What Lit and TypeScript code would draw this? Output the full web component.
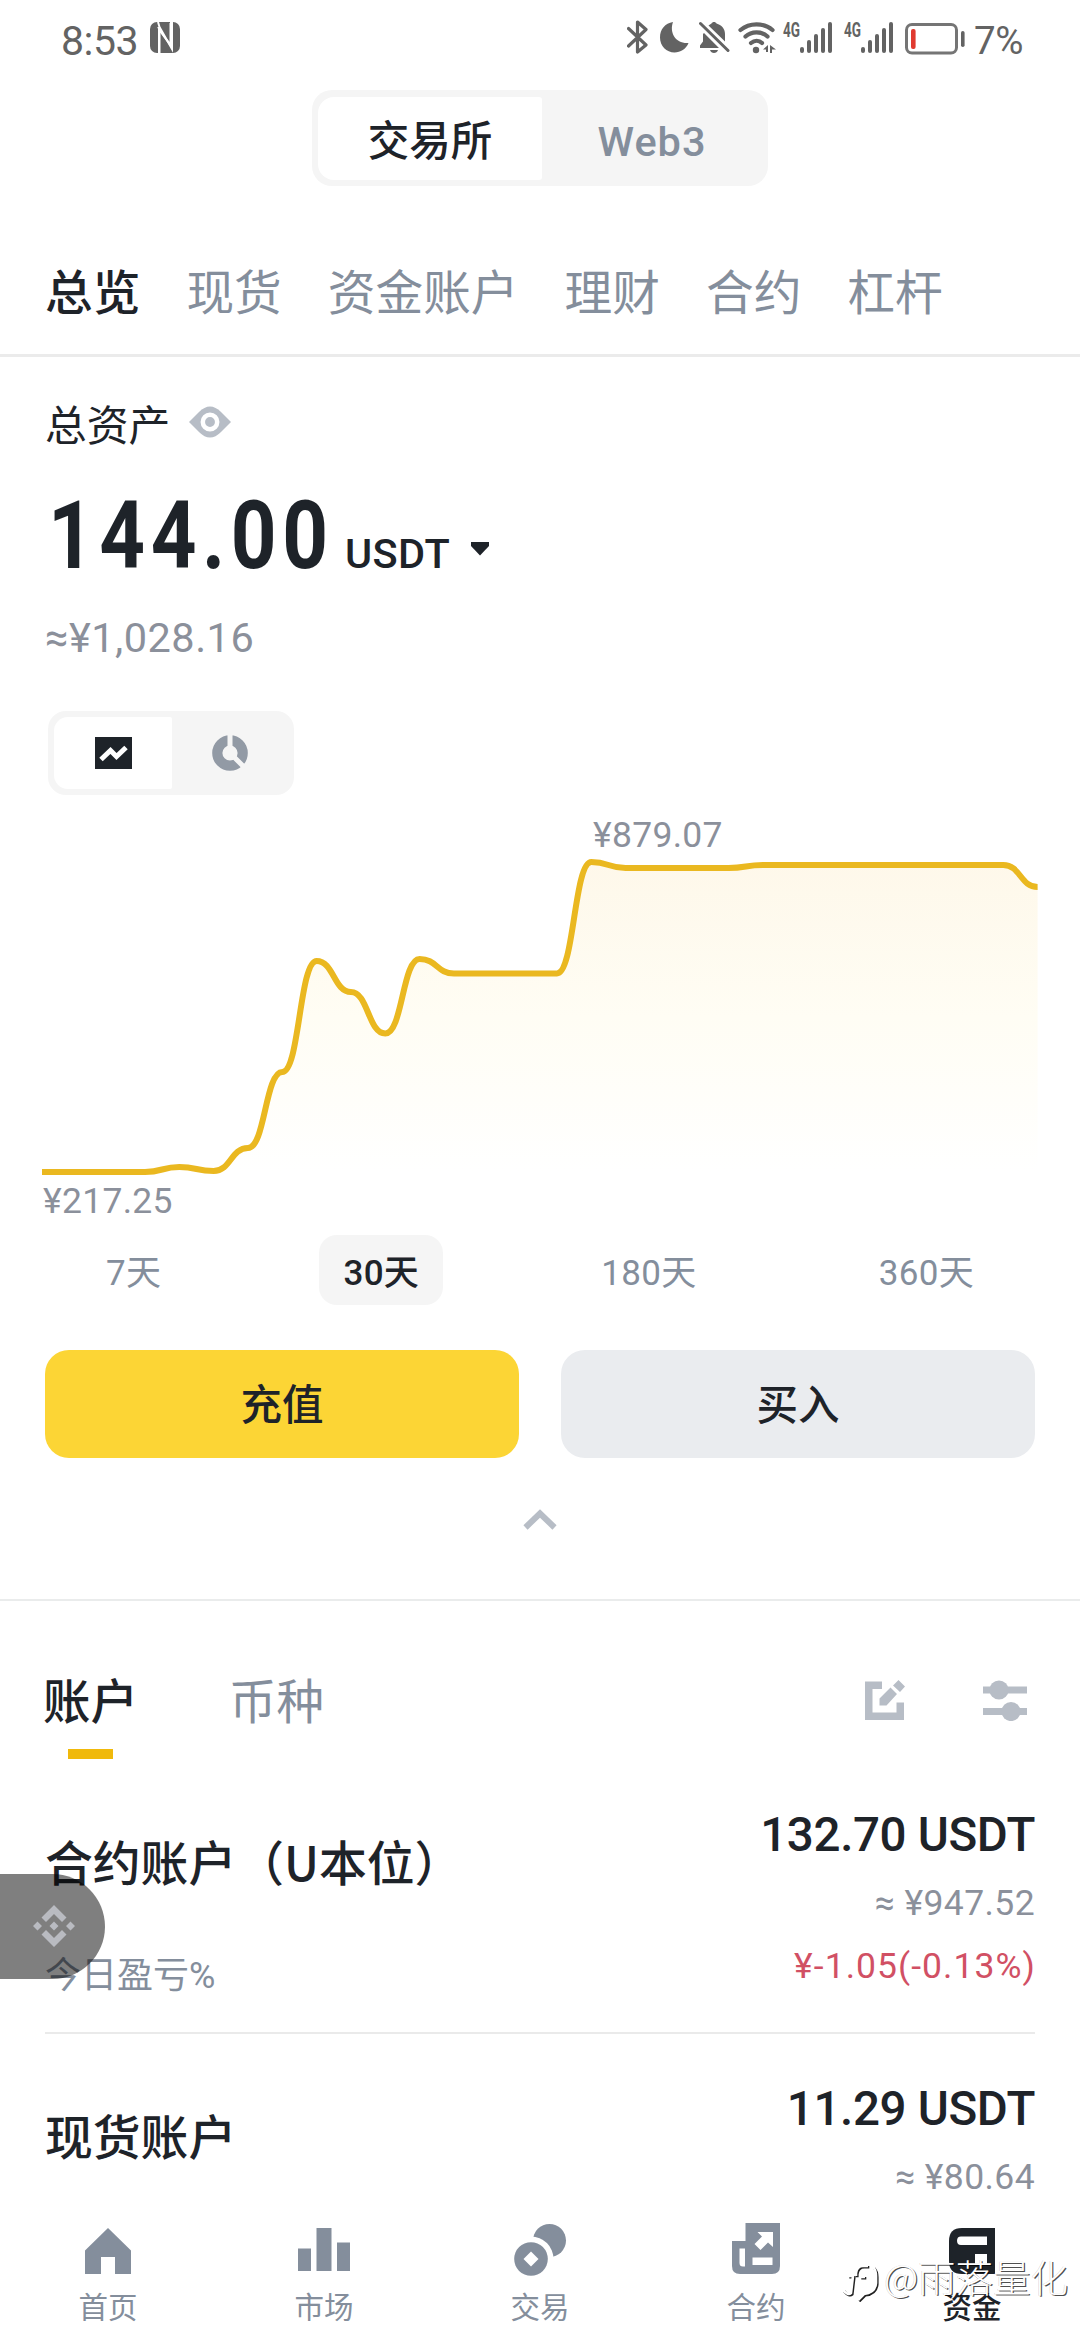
import { LitElement, html, css, svg } from "lit";
import { customElement, property } from "lit/decorators.js";
import { classMap } from "lit/directives/class-map.js";

const signalIcon = html`<svg class="signal" width="50" height="36" viewBox="0 0 50 36">
  <text x="0" y="16.500" class="net" textLength="17" lengthAdjust="spacingAndGlyphs">4G</text>
  <g fill="#636363">
    <rect x="17" y="27" width="4" height="6" rx="2" />
    <rect x="24" y="20" width="4" height="13" rx="2" />
    <rect x="31" y="14" width="4" height="19" rx="2" />
    <rect x="38" y="8" width="4" height="25" rx="2" />
    <rect x="45" y="2" width="4" height="31" rx="2" />
  </g>
</svg>`;

@customElement("status-bar")
export class StatusBar extends LitElement {
  static styles = css`
    :host {
      display: flex;
      height: 90px;
      padding: 20px 58px 0 61px;
      box-sizing: border-box;
      align-items: flex-start;
      font-family: Roboto, "Noto Sans CJK SC", sans-serif;
      color: #636363;
    }
    .time {
      font-size: 41px;
      line-height: 42px;
      letter-spacing: -0.500px;
      width: 89px;
    }
    .right {
      display: flex;
      margin-left: auto;
    }
    .net {
      font: 700 20px Roboto, sans-serif;
      fill: #636363;
    }
    .bt { margin-right: 12px; }
    .moon { margin-right: 10px; }
    .bell { margin-right: 8px; }
    .wifi { margin-right: 6px; }
    .signal {
      margin-right: 11px;
      overflow: visible;
    }
    .battery { margin-right: 9px; }
    .pct {
      font-size: 38.500px;
      line-height: 41px;
      letter-spacing: -0.500px;
      width: 48px;
      white-space: nowrap;
    }
  `;

  render() {
    return html`
      <span class="time">8:53</span>
      <svg width="30" height="36" viewBox="0 0 30 36">
        <rect x="0" y="2" width="30" height="31" rx="7" fill="#636363" />
        <path d="M9.500 33V7L22 29V2M8 2l1.500 5M20.500 3v22L8 7" fill="none" stroke="#fff" stroke-width="2" />
        <path d="M9 33V9.500L21 26V2" fill="none" stroke="#fff" stroke-width="2" />
      </svg>
      <div class="right">
        <svg class="bt" width="21" height="36" viewBox="0 0 21 36">
          <path d="M1.500 8.500 19 25 10.500 32V2L19 9.500 1.500 26" fill="none" stroke="#636363" stroke-width="3.200" stroke-linejoin="round" stroke-linecap="round" />
        </svg>
        <svg class="moon" width="29" height="36" viewBox="0 0 29 36">
          <path d="M13 2C9 13 16 24 28.500 23 26 29 20.500 32.500 14.500 32.500 6.500 32.500 0 26 0 17.500 0 9.500 5 3 13 2Z" fill="#636363" />
        </svg>
        <svg class="bell" width="31" height="36" viewBox="0 0 31 36">
          <path d="M5 13 20 28H1v-2.500l3-4V14ZM9.500 5.500 12.500 3.500c1-2 4-2 5 0 5 1.500 8.500 5 8.500 10.500V21.500ZM11 30h8c-1 4-7 4-8 0Z" fill="#636363" />
          <path d="M1.500 3.500 29 30.500" stroke="#636363" stroke-width="3" stroke-linecap="round" />
        </svg>
        <svg class="wifi" width="39" height="36" viewBox="0 0 39 36">
          <g fill="none" stroke="#636363" stroke-width="4.200" stroke-linecap="round">
            <path d="M2.500 10c9-7.500 23-7.500 32 0" />
            <path d="M7.500 16.500c6-5.500 16-5.500 22 0" />
            <path d="M13 23c3.500-3 8-3 11 0" />
          </g>
          <circle cx="18" cy="30" r="3.200" fill="#636363" />
          <path d="M25 29.500 30 25v7h-2v-2.500ZM32 25l6 4.500H34V33H32Z" fill="#636363" />
        </svg>
        ${signalIcon}${signalIcon}
        <svg class="battery" width="60" height="36" viewBox="0 0 60 36">
          <rect x="1.500" y="4.500" width="50" height="28.500" rx="5.500" fill="none" stroke="#757575" stroke-width="3" />
          <rect x="6" y="9" width="4.600" height="20" rx="2" fill="#e03a30" />
          <rect x="56" y="11" width="3.600" height="16" rx="1.800" fill="#636363" />
        </svg>
        <span class="pct">7%</span>
      </div>
    `;
  }
}

/** Daily asset values as chart ordinates, one per day. */
const SERIES = [
  1172, 1172, 1172, 1172, 1167, 1171, 1148, 1072, 961, 992, 1033.5, 959, 973.5, 973.5, 973.5,
  973.5, 862, 868, 868, 868, 868, 865, 865, 865, 865, 865, 865, 865, 865, 887,
];

@customElement("asset-chart")
export class AssetChart extends LitElement {
  @property({ attribute: false }) points: number[] = SERIES;

  static styles = css`
    :host { display: block; }
    svg { display: block; }
    .label {
      font: 400 35.500px Roboto, sans-serif;
      fill: #8b909b;
      letter-spacing: 0.500px;
    }
  `;

  private linePath() {
    const step = 995.6 / (this.points.length - 1);
    let d = `M42 ${this.points[0]}`;
    for (let i = 1; i < this.points.length; i++) {
      const x0 = 42 + step * (i - 1);
      const x1 = 42 + step * i;
      const mid = (x0 + x1) / 2;
      d += `C${mid} ${this.points[i - 1]} ${mid} ${this.points[i]} ${x1} ${this.points[i]}`;
    }
    return d;
  }

  render() {
    const d = this.linePath();
    return html`<svg width="1080" height="440" viewBox="0 795 1080 440">
      <defs>
        <linearGradient id="fade" gradientUnits="userSpaceOnUse" x1="0" y1="862" x2="0" y2="1172">
          <stop offset="0" stop-color="#fef8ea" />
          <stop offset="0.500" stop-color="#fffdf4" />
          <stop offset="1" stop-color="#fff" />
        </linearGradient>
      </defs>
      ${svg`<path d="${d}V1172H42Z" fill="url(#fade)" />
      <path d="${d}" fill="none" stroke="#eab820" stroke-width="6" />`}
      <text x="593" y="847" class="label" textLength="130">¥879.07</text>
      <text x="43" y="1213" class="label" textLength="130">¥217.25</text>
    </svg>`;
  }
}

@customElement("bottom-nav")
export class BottomNav extends LitElement {
  static styles = css`
    :host {
      display: grid;
      grid-template-columns: repeat(5, 1fr);
      height: 140px;
      background: #fff;
      font-family: "Noto Sans CJK SC", sans-serif;
      color: #848e9c;
    }
    .item {
      display: flex;
      flex-direction: column;
      align-items: center;
      padding-top: 20px;
    }
    .item.active { color: #1e2329; }
    .item svg { display: block; }
    .label {
      margin-top: 7px;
      font-size: 29.500px;
      line-height: 36px;
    }
    .item.active .label { font-weight: 500; }
  `;

  private items = [
    {
      label: "首页",
      icon: svg`<path d="M30 8 53 30.500V54H37V37H23V54H7V30.500Z" fill="currentColor" />`,
    },
    {
      label: "市场",
      icon: svg`<path d="M4 28.500H17V51H4ZM22.500 8H37.500V51H22.500ZM43 22.500H56V51H43Z" fill="currentColor" />`,
    },
    {
      label: "交易",
      icon: svg`<circle cx="39.500" cy="20.500" r="16.500" fill="currentColor" />
        <circle cx="21" cy="39" r="22.500" fill="#fff" />
        <circle cx="21" cy="39" r="16.800" fill="currentColor" />
        <path d="M21 31.500 28.500 39 21 46.500 13.500 39Z" fill="#fff" />`,
    },
    {
      label: "合约",
      icon: svg`<path d="M19.500 3H54V46q0 8-8 8H14q-8 0-8-8V21H19.500Z" fill="currentColor" />
        <path d="M19 28.500V46.500H17q-3.500 0-3.500-3.500V28.500ZM26.500 37.500H46.500V45H26.500ZM31.500 12H47V27L42 22.500 34.500 30 28.500 24 36 16.500Z" fill="#fff" />`,
    },
    {
      label: "资金",
      active: true,
      icon: svg`<path d="M20 8H53V54H20Q7 54 7 41V21Q7 8 20 8Z" fill="currentColor" />
        <path d="M19 16.500H45V25H19q-4 0-4-4.200 0-4.300 4-4.300ZM33 34H45V44H33Z" fill="#fff" />`,
    },
  ];

  render() {
    return this.items.map(
      (i) => html`<div class=${classMap({ item: true, active: !!i.active })}>
        <svg width="60" height="60" viewBox="0 0 60 60">${i.icon}</svg>
        <span class="label">${i.label}</span>
      </div>`,
    );
  }
}

@customElement("app-root")
export class AppRoot extends LitElement {
  static styles = css`
    :host {
      display: flex;
      flex-direction: column;
      position: relative;
      width: 1080px;
      height: 2340px;
      overflow: hidden;
      background: #fff;
      color: #1e2329;
      font-family: Roboto, "Noto Sans CJK SC", sans-serif;
    }
    svg { display: block; }
    .main {
      flex: 1;
      min-height: 0;
      overflow: hidden;
    }
    .mode {
      display: grid;
      grid-template-columns: 224px 1fr;
      width: 456px;
      height: 96px;
      margin: 0 auto;
      padding: 7px 6px 6px;
      box-sizing: border-box;
      border-radius: 20px;
      background: #f5f5f5;
      font-size: 41.500px;
      font-weight: 500;
      line-height: 90px;
      text-align: center;
    }
    .mode span { height: 83px; }
    .mode .on {
      border-radius: 16px 3px 3px 16px;
      background: #fff;
    }
    .mode .off {
      color: #848e9c;
      letter-spacing: 1px;
    }
    .tabs {
      display: flex;
      gap: 46px;
      height: 171px;
      padding: 78px 0 0 45px;
      box-sizing: border-box;
      border-bottom: 3px solid #ebebeb;
      font-size: 47.700px;
      line-height: 60px;
      color: #848e9c;
    }
    .tabs .on {
      color: #1e2329;
      font-weight: 500;
    }
    .overview { border-bottom: 2px solid #eaecec; }
    .caption {
      display: flex;
      align-items: center;
      gap: 19px;
      padding: 45px 45px 0;
      font-size: 41.800px;
      line-height: 50px;
    }
    .caption svg { margin-top: -10px; }
    .total {
      display: flex;
      align-items: baseline;
      padding: 37px 48px 0;
      height: 94px;
      line-height: 94px;
    }
    .amount {
      font-size: 94px;
      font-weight: 700;
      letter-spacing: 6.500px;
      width: 297px;
      white-space: nowrap;
      transform: scaleX(0.85);
      transform-origin: 0 50%;
    }
    .unit {
      font-size: 41.500px;
      font-weight: 500;
      width: 125px;
      letter-spacing: 0.400px;
    }
    .fiat {
      padding: 30px 45px 0;
      font-size: 41.500px;
      line-height: 50px;
      letter-spacing: 0.500px;
      color: #8b909b;
    }
    .view {
      display: grid;
      grid-template-columns: 118px 1fr;
      width: 246px;
      height: 84px;
      margin: 48px 0 0 48px;
      padding: 6px;
      box-sizing: border-box;
      border-radius: 18px;
      background: #f5f5f5;
    }
    .view div {
      display: flex;
      align-items: center;
      justify-content: center;
    }
    .view .on {
      border-radius: 14px 2px 2px 14px;
      background: #fff;
    }
    .ranges {
      display: flex;
      justify-content: space-between;
      height: 70px;
      padding: 0 82px;
      font-size: 35px;
      line-height: 78px;
      color: #848e9c;
    }
    .ranges span {
      padding: 0 24px;
      border-radius: 18px;
      letter-spacing: 0.300px;
    }
    .ranges .on {
      background: #f5f5f5;
      color: #1e2329;
      font-weight: 500;
    }
    .actions {
      display: grid;
      grid-template-columns: 1fr 1fr;
      gap: 42px;
      padding: 45px 45px 0;
    }
    .action {
      height: 108px;
      border-radius: 24px;
      background: #eaecef;
      text-align: center;
      font-size: 41.500px;
      font-weight: 500;
      line-height: 111px;
    }
    .action.primary { background: #fcd535; }
    .fold { margin: 48px auto 66px; }
    .heads {
      display: flex;
      height: 159px;
      padding: 72px 45px 0 43px;
      box-sizing: border-box;
      font-size: 47.500px;
      line-height: 60px;
      color: #848e9c;
    }
    .head {
      display: flex;
      flex-direction: column;
      align-items: center;
      width: 95px;
      margin-right: 91px;
    }
    .head.on {
      color: #1e2329;
      font-weight: 500;
    }
    .head.on::after {
      content: "";
      width: 45px;
      height: 10px;
      margin-top: 16px;
      background: #f0b90b;
    }
    .tools {
      display: flex;
      gap: 77px;
      margin: 6px 8px 0 auto;
    }
    .account {
      display: flex;
      justify-content: space-between;
      height: 274px;
      margin: 0 45px;
      box-sizing: border-box;
      border-bottom: 2px solid #eaeaea;
    }
    .account:last-child {
      height: auto;
      border-bottom: 0;
    }
    .name {
      padding-top: 71px;
      font-size: 47.800px;
      font-weight: 500;
      line-height: 60px;
      font-family: "Noto Sans CJK SC", sans-serif;
    }
    .pnl-label {
      margin-top: 63px;
      font-size: 36px;
      line-height: 44px;
      color: #848e9c;
    }
    .figures {
      padding-top: 47px;
      text-align: right;
      white-space: nowrap;
    }
    .value {
      font-size: 47.500px;
      font-weight: 500;
      line-height: 56px;
      letter-spacing: -0.350px;
    }
    .approx {
      margin-top: 18px;
      font-size: 35.500px;
      line-height: 44px;
      letter-spacing: 0.400px;
      color: #8b909b;
    }
    .pnl {
      margin: 19px -1px 0 0;
      font-size: 35.500px;
      line-height: 44px;
      letter-spacing: 1.050px;
      color: #d15064;
    }
    .float {
      position: absolute;
      left: 0;
      top: 1874px;
      width: 105px;
      height: 105px;
      border-radius: 0 53px 53px 0;
      background: rgba(0, 0, 0, 0.5);
    }
    .float svg { margin: 31px 0 0 33px; }
    .mark {
      position: absolute;
      left: 842px;
      top: 2250px;
      display: flex;
      align-items: center;
      gap: 5px;
      font-family: "Noto Sans CJK SC", sans-serif;
      font-size: 37.500px;
      font-weight: 300;
      line-height: 52px;
      color: #fff;
      white-space: nowrap;
      text-shadow: 1.200px 1.200px 0 rgba(0, 0, 0, 0.7), -0.500px -0.500px 0.500px rgba(0, 0, 0, 0.2);
    }
    .mark svg { margin-top: 12px; }
  `;

  private account(name: string, value: string, approx: string, pnl?: string) {
    return html`<div class="account">
      <div>
        <div class="name">${name}</div>
        ${pnl ? html`<div class="pnl-label">今日盈亏%</div>` : ""}
      </div>
      <div class="figures">
        <div class="value">${value}</div>
        <div class="approx">${approx}</div>
        ${pnl ? html`<div class="pnl">${pnl}</div>` : ""}
      </div>
    </div>`;
  }

  render() {
    return html`
      <status-bar></status-bar>
      <div class="main">
        <div class="mode"><span class="on">交易所</span><span class="off">Web3</span></div>
        <div class="tabs">
          <span class="on">总览</span><span>现货</span><span>资金账户</span><span>理财</span><span>合约</span><span>杠杆</span>
        </div>
        <section class="overview">
          <div class="caption">
            总资产
            <svg width="42" height="32" viewBox="0 0 42 32">
              <path d="M0 16 10 6Q21-5 32 6L42 16 32 26Q21 37 10 26Z" fill="#b7bdc6" />
              <circle cx="21" cy="16" r="7.200" fill="#b7bdc6" stroke="#fff" stroke-width="4.500" />
            </svg>
          </div>
          <div class="total">
            <span class="amount">144.00</span>
            <span class="unit">USDT</span>
            <svg width="20" height="26" viewBox="0 0 20 26">
              <path d="M1 0H19V4L10 13.500 1 4Z" fill="#1e2329" />
            </svg>
          </div>
          <div class="fiat">≈¥1,028.16</div>
          <div class="view">
            <div class="on">
              <svg width="37" height="32" viewBox="0 0 37 32">
                <rect width="37" height="32" fill="#1e2329" />
                <path d="M6 22.500 15.500 13.500 21.500 19.500 31 10.500" fill="none" stroke="#fff" stroke-width="5" />
              </svg>
            </div>
            <div>
              <svg width="36" height="36" viewBox="0 0 36 36">
                <circle cx="18" cy="18" r="12.700" fill="none" stroke="#929aa5" stroke-width="10.200" />
                <path d="M18 14V0M21 21 33 33" stroke="#f5f5f5" stroke-width="5" />
              </svg>
            </div>
          </div>
          <asset-chart></asset-chart>
          <div class="ranges"><span>7天</span><span class="on">30天</span><span>180天</span><span>360天</span></div>
          <div class="actions">
            <div class="action primary">充值</div>
            <div class="action">买入</div>
          </div>
          <svg class="fold" width="34" height="27" viewBox="0 0 34 27">
            <path d="M2.500 21.500 17 7.500 31.500 21.500" fill="none" stroke="#b7bdc6" stroke-width="6" />
          </svg>
        </section>
        <div class="heads">
          <div class="head on">账户</div>
          <div class="head">币种</div>
          <div class="tools">
            <svg width="41" height="42" viewBox="0 0 41 42">
              <path d="M0 2.500H17V10H7.500V33.500H31.500V23.500H39V41H0Z" fill="#b7bdc6" />
              <path d="M14.500 19.500 25.500 8.500 32 15 21.500 26.500H14.500ZM28 6.500 33.500 1 40 7.500 35 13Z" fill="#b7bdc6" />
            </svg>
            <svg width="44" height="42" viewBox="0 0 44 42">
              <path d="M0 7.500H44V14.500H0ZM0 29H44V36H0Z" fill="#b7bdc6" />
              <circle cx="16" cy="11" r="9.600" fill="#b7bdc6" />
              <circle cx="28" cy="32.500" r="9.600" fill="#b7bdc6" />
            </svg>
          </div>
        </div>
        ${this.account("合约账户（U本位）", "132.70 USDT", "≈ ¥947.52", "¥-1.05(-0.13%)")}
        ${this.account("现货账户", "11.29 USDT", "≈ ¥80.64")}
      </div>
      <bottom-nav></bottom-nav>
      <div class="float">
        <svg width="42" height="42" viewBox="0 0 42 42" fill="#b9bbc1">
          <path d="M21 0 33.500 12.500 29 17 21 9 13 17 8.500 12.500ZM21 42 33.500 29.500 29 25 21 33 13 25 8.500 29.500ZM21 16.500 25.500 21 21 25.500 16.500 21ZM4.500 16.500 9 21 4.500 25.500 0 21ZM37.500 16.500 42 21 37.500 25.500 33 21Z" />
        </svg>
      </div>
      <div class="mark">
        <svg width="37" height="40" viewBox="0 0 37 40" fill="none" stroke-width="2.600">
          <g stroke="#222" transform="translate(1.300 1.300)">
            <path d="M1 28Q6 34 9 31L11 14H6M14 14V11Q15 4 21 4H26M18 15H23M31 5Q34 8 34 14V21Q33 31 22 32L16 38" />
          </g>
          <path stroke="#fff" d="M1 28Q6 34 9 31L11 14H6M14 14V11Q15 4 21 4H26M18 15H23M31 5Q34 8 34 14V21Q33 31 22 32L16 38" />
        </svg>
        @雨落量化
      </div>
    `;
  }
}
